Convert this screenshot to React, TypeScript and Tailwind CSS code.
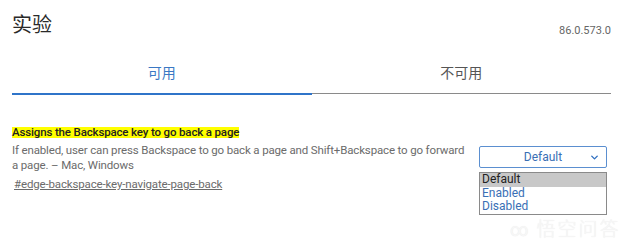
import { ChevronDown } from 'lucide-react'

export default function App() {
  return (
    <main
      className="w-[640px] h-[246px] bg-white overflow-hidden relative"
      style={{ fontFamily: "Roboto, 'Noto Sans CJK SC', sans-serif" }}>
      <div className="pl-[12px] pr-[29px]">
        {/* Header */}
        <div className="flex justify-between items-end h-[38px]">
          <h1 className="text-[20px] leading-none text-[#2a2a2a] pb-[3px]">实验</h1>
          <span className="text-[11px] text-[#666] leading-none pb-[2px]">86.0.573.0</span>
        </div>

        {/* Tabs */}
        <div className="flex mt-[25px]">
          <div className="flex-1 flex flex-col items-center">
            <span className="text-[14px] leading-[20px] text-[#3a78c4]">可用</span>
            <div className="w-full h-[2px] bg-[#2f74c9] mt-[10px]" />
          </div>
          <div className="flex-1 flex flex-col items-center">
            <span className="text-[14px] leading-[20px] text-[#555]">不可用</span>
            <div className="w-full h-[1px] bg-[#8a8a8a] mt-[10px] mb-[1px]" />
          </div>
        </div>

        {/* Flag */}
        <div className="flex justify-between mt-[32px]">
          <div className="w-[454px]">
            <div className="flex">
              <span className="bg-[#ffff00] text-[11.5px] tracking-[-0.15px] font-medium text-[#222] leading-[11px] h-[11px]">
                Assigns the Backspace key to go back a page
              </span>
            </div>
            <p className="text-[11.5px] tracking-[-0.15px] text-[#6b6b6b] leading-[15px] mt-[5px]">
              If enabled, user can press Backspace to go back a page and Shift+Backspace to go forward a page. – Mac, Windows
            </p>
            <a className="block text-[11.5px] tracking-[-0.15px] text-[#6b6b6b] leading-[15px] underline ml-[2px] mt-[4px]">
              #edge-backspace-key-navigate-page-back
            </a>
          </div>
          <div className="w-[128px] mt-[19px] mr-[4px]">
            <div className="h-[22px] border border-[#5b8fd0] rounded-[2px] flex items-center justify-center relative">
              <span className="text-[12px] text-[#3a6fb5]">Default</span>
              <ChevronDown className="absolute right-[6px] top-[5px] w-[11px] h-[11px] text-[#2f6fc0]" strokeWidth={3} />
            </div>
            <div className="mt-[4px] border border-[#8a8a8a] text-[12px] leading-[13.5px]">
              <div className="bg-[#c8c8c8] text-[#222] pl-[2px]">Default</div>
              <div className="text-[#3a6fb5] pl-[2px]">Enabled</div>
              <div className="text-[#3a6fb5] pl-[2px]">Disabled</div>
            </div>
          </div>
        </div>
      </div>

      {/* watermark */}
      <div className="absolute left-[510px] top-[220px] flex items-center gap-[8px] text-[#f7f7f7] leading-none [text-shadow:0_0_1px_#e6e6e6]">
        <span className="text-[18px]">∞</span>
        <span className="text-[19px] font-light tracking-[2px]">悟空问答</span>
      </div>
    </main>
  )
}
